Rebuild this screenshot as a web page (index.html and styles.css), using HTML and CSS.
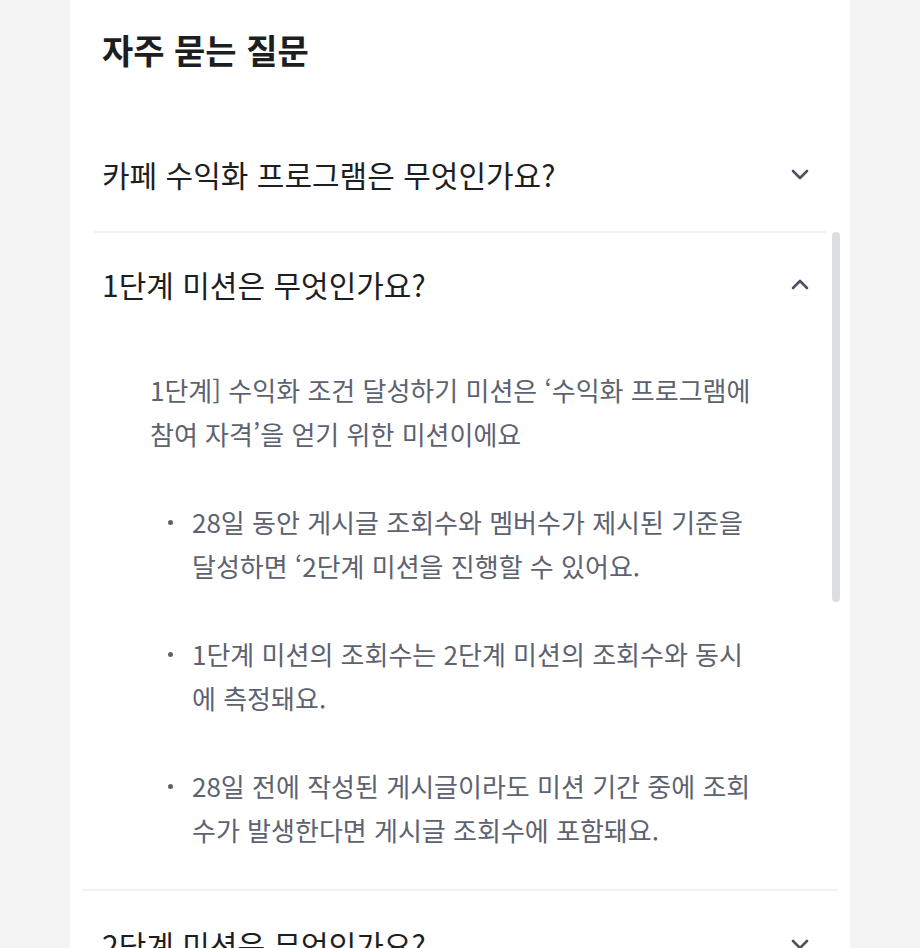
FILE: index.html
```html
<!DOCTYPE html>
<html lang="ko">
  <head>
    <meta charset="UTF-8" />
    <title>자주 묻는 질문</title>
    <link rel="stylesheet" href="styles.css">
  </head>
  <body>
    <div class="faq-panel">
      <h1 class="faq-title">자주 묻는 질문</h1>

      <div class="faq-item">
        <div class="faq-question">
          <span>카페 수익화 프로그램은 무엇인가요?</span>
          <svg class="chevron" width="18" height="11" viewBox="0 0 18 11"><path d="M2 2 L9 9 L16 2" /></svg>
        </div>
      </div>
      <div class="divider narrow"></div>

      <div class="faq-item open">
        <div class="faq-question">
          <span>1단계 미션은 무엇인가요?</span>
          <svg class="chevron" width="18" height="11" viewBox="0 0 18 11"><path d="M2 9 L9 2 L16 9" /></svg>
        </div>
        <div class="faq-answer">
          <p>1단계] 수익화 조건 달성하기 미션은 ‘수익화 프로그램에 참여 자격’을 얻기 위한 미션이에요</p>
          <ul>
            <li>28일 동안 게시글 조회수와 멤버수가 제시된 기준을 달성하면 ‘2단계 미션을 진행할 수 있어요.</li>
            <li>1단계 미션의 조회수는 2단계 미션의 조회수와 동시에 측정돼요.</li>
            <li>28일 전에 작성된 게시글이라도 미션 기간 중에 조회수가 발생한다면 게시글 조회수에 포함돼요.</li>
          </ul>
        </div>
        <div class="scroll-thumb"></div>
      </div>
      <div class="divider wide"></div>

      <div class="faq-item">
        <div class="faq-question">
          <span>2단계 미션은 무엇인가요?</span>
          <svg class="chevron" width="18" height="11" viewBox="0 0 18 11"><path d="M2 2 L9 9 L16 2" /></svg>
        </div>
      </div>
    </div>
  </body>
</html>
```

FILE: styles.css
```css
body {
  margin: 0;
  background-color: #f4f4f4;
  font-family: "Noto Sans CJK KR", "Noto Sans", sans-serif;
  color: #1d1e21;
  overflow: hidden;
}
.faq-panel {
  margin: 0 70px;
  height: 948px;
  overflow: hidden;
  background-color: #fff;
}
.faq-title {
  margin: 0;
  padding: 26px 32px 0;
  height: 95px;
  font-size: 34px;
  line-height: 48px;
  font-weight: 700;
}
.faq-item {
  position: relative;
}
.faq-question {
  display: flex;
  align-items: center;
  justify-content: space-between;
  height: 110px;
  padding: 0 41px 4px 32px;
  font-size: 30px;
  font-weight: 400;
  box-sizing: border-box;
}
.open .faq-question {
  padding-bottom: 8px;
}
.chevron {
  flex-shrink: 0;
}
.chevron path {
  fill: none;
  stroke: #4a5160;
  stroke-width: 2.6;
  stroke-linecap: round;
  stroke-linejoin: round;
}
.divider {
  height: 2px;
  background-color: #f1f1f3;
}
.divider.narrow {
  margin: 0 24px;
}
.divider.wide {
  margin: 0 12px;
}
.faq-answer {
  width: 608px;
  margin-left: 80px;
  padding: 25px 0 37px;
  font-size: 26px;
  line-height: 44px;
  color: #5d6270;
}
.faq-answer p {
  margin: 0 0 44px;
}
.faq-answer ul {
  list-style: none;
  margin: 0;
  padding: 0 0 0 42px;
}
.faq-answer li {
  position: relative;
  margin-bottom: 44px;
}
.faq-answer li:last-child {
  margin-bottom: 0;
}
.faq-answer li::before {
  content: "";
  position: absolute;
  left: -24px;
  top: 20px;
  width: 5px;
  height: 5px;
  border-radius: 50%;
  background-color: #5d6270;
}
.scroll-thumb {
  position: absolute;
  top: -1px;
  right: 10px;
  width: 8px;
  height: 370px;
  border-radius: 4px;
  background-color: #dcdde3;
}
```
